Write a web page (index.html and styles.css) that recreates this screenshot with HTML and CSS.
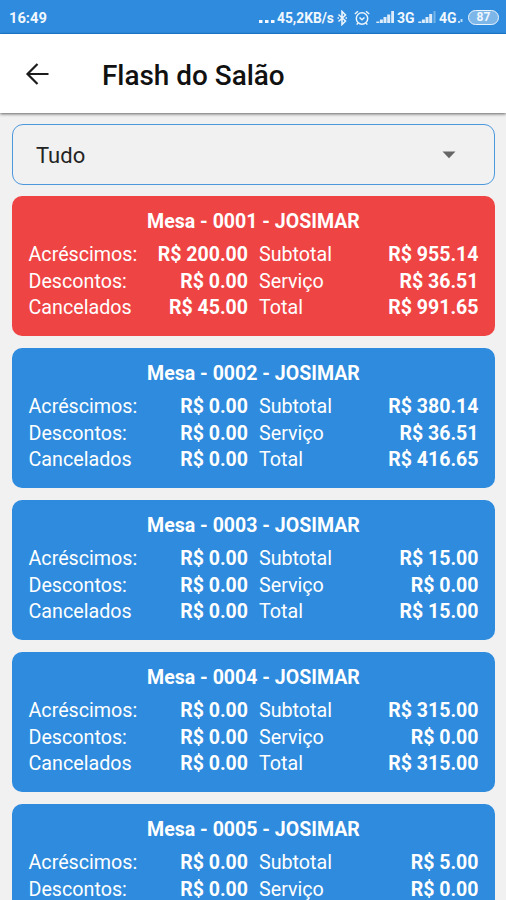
FILE: index.html
```html
<!DOCTYPE html>
<html lang="pt-BR">
<head>
<meta charset="utf-8">
<title>Flash do Salão</title>
<link rel="stylesheet" href="styles.css">
</head>
<body>
<div class="status">
  <span class="clock">16:49</span>
  <svg class="dots" width="17" height="4" viewBox="0 0 17 4"><path d="M1 0h3.500v3H1zM7 0h3.500v3H7zM13 0h3.500v3h-3.500z" fill="#f2f8fd"/></svg>
  <span class="speed">45,2KB/s</span>
  <svg class="bt" width="11" height="16" viewBox="0 0 11 16"><path d="M1.500 4.500l7 6.500-3.500 3.500v-13L8.500 5l-7 6.500M.5 8h1.500M8.500 8H10" fill="none" stroke="#eaf4fc" stroke-width="1.600"/></svg>
  <svg class="alarm" width="16" height="16" viewBox="0 0 16 16"><g fill="none" stroke="#eaf4fc" stroke-width="1.500"><circle cx="8" cy="8.500" r="5.700"/><path d="M5.500 7.500L8 9.800l2.500-2.300M.8 4L4 1.200M15.200 4L12 1.200M4 13l-1.300 1.600M12 13l1.300 1.600"/></g></svg>
  <svg class="signal" width="19" height="13" viewBox="0 0 19 13"><path d="M.3 10.500h3V12h-3zM3.900 8.500h3V12h-3zM7.500 6h3v6h-3zM11.200 3.500h3V12h-3zM15.200 0H18v12h-2.800z" fill="#dcecfa"/></svg>
  <span class="net three">3G</span>
  <svg class="signal" width="19" height="13" viewBox="0 0 19 13"><path d="M.3 10.500h3V12h-3zM3.900 8.500h3V12h-3zM7.500 6h3v6h-3zM11.200 3h3v9h-3z" fill="#dcecfa"/><path d="M15.500 0h2v12h-2z" fill="#75b4e9"/></svg>
  <span class="net four">4G</span>
  <svg class="mini" width="6" height="6" viewBox="0 0 6 6"><path d="M0 3h2v2H0zM2.500 1h2v3h-2z" fill="#b9d9f4"/></svg>
  <span class="battery">87</span>
</div>
<header class="appbar">
  <svg class="back" width="24" height="24" viewBox="0 0 24 24"><path d="M12.500 2L2.500 12l10 10M2.500 12h21" fill="none" stroke="#1c1c1c" stroke-width="2.200"/></svg>
  <h1>Flash do Salão</h1>
</header>
<main>
  <div class="select"><span>Tudo</span><svg width="14" height="8" viewBox="0 0 14 8"><path d="M.5.5h13L7 7.300z" fill="#666"/></svg></div>
  <section class="card red">
    <h2>Mesa - 0001 - JOSIMAR</h2>
    <div class="grid">
      <span>Acréscimos:</span><b>R$ 200.00</b><span>Subtotal</span><b>R$ 955.14</b>
      <span>Descontos:</span><b>R$ 0.00</b><span>Serviço</span><b>R$ 36.51</b>
      <span>Cancelados</span><b>R$ 45.00</b><span>Total</span><b>R$ 991.65</b>
    </div>
  </section>
  <section class="card">
    <h2>Mesa - 0002 - JOSIMAR</h2>
    <div class="grid">
      <span>Acréscimos:</span><b>R$ 0.00</b><span>Subtotal</span><b>R$ 380.14</b>
      <span>Descontos:</span><b>R$ 0.00</b><span>Serviço</span><b>R$ 36.51</b>
      <span>Cancelados</span><b>R$ 0.00</b><span>Total</span><b>R$ 416.65</b>
    </div>
  </section>
  <section class="card">
    <h2>Mesa - 0003 - JOSIMAR</h2>
    <div class="grid">
      <span>Acréscimos:</span><b>R$ 0.00</b><span>Subtotal</span><b>R$ 15.00</b>
      <span>Descontos:</span><b>R$ 0.00</b><span>Serviço</span><b>R$ 0.00</b>
      <span>Cancelados</span><b>R$ 0.00</b><span>Total</span><b>R$ 15.00</b>
    </div>
  </section>
  <section class="card">
    <h2>Mesa - 0004 - JOSIMAR</h2>
    <div class="grid">
      <span>Acréscimos:</span><b>R$ 0.00</b><span>Subtotal</span><b>R$ 315.00</b>
      <span>Descontos:</span><b>R$ 0.00</b><span>Serviço</span><b>R$ 0.00</b>
      <span>Cancelados</span><b>R$ 0.00</b><span>Total</span><b>R$ 315.00</b>
    </div>
  </section>
  <section class="card">
    <h2>Mesa - 0005 - JOSIMAR</h2>
    <div class="grid">
      <span>Acréscimos:</span><b>R$ 0.00</b><span>Subtotal</span><b>R$ 5.00</b>
      <span>Descontos:</span><b>R$ 0.00</b><span>Serviço</span><b>R$ 0.00</b>
    </div>
  </section>
</main>
</body>
</html>
```
FILE: styles.css
```css
* { box-sizing: border-box; }
body {
  margin: 0;
  height: 900px;
  overflow: hidden;
  display: flex;
  flex-direction: column;
  background: #f1f1f1;
  font-family: Roboto, "Liberation Sans", sans-serif;
}
svg { display: block; flex: none; }
.status {
  flex: none;
  height: 34px;
  padding: 2px 7px 0 9px;
  display: flex;
  align-items: center;
  background: #2e8bdd;
  border-bottom: 1px solid #1d7fd6;
  color: #f0f7fd;
  font-size: 14px;
  font-weight: 700;
  white-space: nowrap;
}
.clock { font-size: 14.700px; width: 249px; }
.dots { margin-top: 8px; }
.speed { width: 60px; margin-left: 2px; font-size: 13.800px; }
.bt { margin-left: 0; }
.alarm { margin-left: 6px; }
.signal { margin-left: 6px; margin-top: -1px; }
.net { font-size: 14px; width: 19px; margin-left: 2px; }
.three + .signal { margin-left: 2px; }
.mini { margin-top: 7px; }
.battery {
  margin-left: auto;
  flex: none;
  width: 31px;
  height: 15px;
  border: 1.5px solid #eaf4fc;
  border-radius: 8px;
  background: #7db6e9;
  font-size: 12px;
  line-height: 13px;
  text-align: center;
}
.appbar {
  flex: none;
  height: 79px;
  padding-left: 25px;
  display: flex;
  align-items: center;
  background: #fff;
  box-shadow: 0 1px 3px rgba(0, 0, 0, .6);
}
.appbar h1 {
  margin: 4px 0 0 53px;
  font-size: 27.900px;
  line-height: 34px;
  font-weight: 500;
  color: #111;
}
main {
  flex: none;
  padding: 11px 11px 0 12px;
  display: flex;
  flex-direction: column;
  gap: 12px;
}
.select {
  height: 61px;
  padding: 1px 38px 0 23px;
  display: flex;
  align-items: center;
  justify-content: space-between;
  border: 1.500px solid #4c98dc;
  border-radius: 11px;
  font-size: 22px;
  color: #242424;
}
.card {
  height: 140px;
  padding: 12px 16.500px 0 16.500px;
  border-radius: 10px;
  background: #2e8bdd;
  color: #fff;
  font-size: 19.700px;
}
.red { background: #ef4444; }
.select + .card { margin-top: -1px; }
.card h2 {
  margin: 0 0 6px;
  font-size: 19.550px;
  line-height: 27px;
  font-weight: 700;
  text-align: center;
}
.grid {
  display: grid;
  grid-template-columns: 119.500px 100px 119px 1fr;
  grid-auto-rows: 26.700px;
  line-height: 27px;
}
.grid b { text-align: right; font-weight: 700; font-size: 19.550px; }
.grid span:nth-child(4n + 3) { padding-left: 11px; }
```
